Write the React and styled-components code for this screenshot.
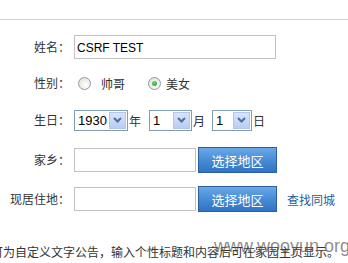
import React from 'react';
import styled, { createGlobalStyle } from 'styled-components';

const GlobalStyle = createGlobalStyle`
  html, body {
    margin: 0;
    padding: 0;
    background: #fff;
  }
  body {
    font-family: "Noto Sans CJK SC", "Liberation Sans", sans-serif;
    font-size: 12px;
    color: #333;
  }
`;

const Page = styled.div`
  position: relative;
  width: 348px;
  height: 263px;
  overflow: hidden;
`;

const TopRule = styled.div`
  height: 19px;
  border-bottom: 1px solid #d6d6d6;
`;

const Form = styled.div`
  padding-top: 15px;
`;

const Row = styled.div`
  display: flex;
  align-items: center;
  height: 24px;
  margin-top: ${(p) => p.$top || 0}px;
`;

const Label = styled.div`
  width: 70px;
  text-align: right;
  flex: none;
  line-height: 24px;
  margin-right: 4px;
  white-space: nowrap;
`;

const TextInput = styled.div`
  box-sizing: border-box;
  width: ${(p) => p.$w}px;
  height: 24px;
  border: 1px solid #c2c2c2;
  padding: 0 2px;
  font-family: "Liberation Sans", Arial, sans-serif;
  font-size: 12px;
  line-height: 24px;
  color: #000;
  background: #fff;
`;

const RadioGroup = styled.label`
  display: flex;
  align-items: center;
  margin-left: ${(p) => p.$left || 0}px;
`;

const RadioDot = styled.span`
  box-sizing: border-box;
  width: 13px;
  height: 13px;
  border-radius: 50%;
  border: 1px solid #8c9aab;
  background: radial-gradient(circle at 60% 65%, #fff 0%, #e6e6e0 70%, #d2d2cc 100%);
  display: flex;
  align-items: center;
  justify-content: center;
  margin-right: ${(p) => p.$gap}px;

  &::after {
    content: '';
    display: ${(p) => (p.$checked ? 'block' : 'none')};
    width: 5px;
    height: 5px;
    border-radius: 50%;
    background: radial-gradient(circle at 40% 35%, #6fd36f, #1f9b2a);
  }
`;

const Select = styled.div`
  box-sizing: border-box;
  display: flex;
  align-items: stretch;
  width: ${(p) => p.$w}px;
  height: 21px;
  border: 1px solid #7f9db9;
  background: #fff;
  font-family: "Liberation Sans", Arial, sans-serif;
  font-size: 13px;
  color: #000;
`;

const SelectValue = styled.span`
  flex: 1;
  padding-left: 3px;
  line-height: 19px;
`;

const SelectArrow = styled.span`
  width: 17px;
  margin: 1px;
  background: linear-gradient(#d9e4f8, #b9cdf1);
  border: 1px solid #b3c6ea;
  box-sizing: border-box;
  display: flex;
  align-items: center;
  justify-content: center;
`;

const Unit = styled.span`
  margin: 0 ${(p) => p.$right || 0}px 0 1px;
  line-height: 21px;
`;

const BlueButton = styled.button`
  box-sizing: border-box;
  width: 79px;
  height: 26px;
  margin-left: 2px;
  padding: 0;
  border: 1px solid #2b5f9e;
  background: linear-gradient(#6aa9e6 0%, #4b8fd8 45%, #2f73c4 100%);
  color: #fff;
  font-family: "Noto Sans CJK SC", sans-serif;
  font-size: 13px;
  cursor: pointer;
`;

const Link = styled.a`
  margin-left: 10px;
  color: #1f5c96;
  text-decoration: none;
  font-size: 12px;
`;

const Notice = styled.div`
  margin-top: 32px;
  margin-left: -9px;
  white-space: nowrap;
  font-size: 12px;
  color: #333;
`;

const Watermark = styled.div`
  position: absolute;
  left: 214px;
  top: 236px;
  font-family: "Liberation Sans", Arial, sans-serif;
  font-size: 18px;
  color: rgba(90, 90, 90, 0.7);
  white-space: nowrap;
`;

const Chevron = () => (
  <svg width="9" height="6" viewBox="0 0 9 6">
    <path d="M1 1 L4.5 4.5 L8 1" fill="none" stroke="#4a6ea9" strokeWidth="2" />
  </svg>
);

const DateSelect = ({ w, value }) => (
  <Select $w={w}>
    <SelectValue>{value}</SelectValue>
    <SelectArrow>
      <Chevron />
    </SelectArrow>
  </Select>
);

const App = () => (
  <Page>
    <GlobalStyle />
    <TopRule />
    <Form>
      <Row>
        <Label>姓名：</Label>
        <TextInput $w={202}>CSRF TEST</TextInput>
      </Row>
      <Row $top={12}>
        <Label>性别：</Label>
        <RadioGroup $left={4}>
          <RadioDot $gap={10} />
          帅哥
        </RadioGroup>
        <RadioGroup $left={23}>
          <RadioDot $gap={5} $checked />
          美女
        </RadioGroup>
      </Row>
      <Row $top={13}>
        <Label>生日：</Label>
        <DateSelect w={54} value="1930" />
        <Unit $right={8}>年</Unit>
        <DateSelect w={43} value="1" />
        <Unit $right={7}>月</Unit>
        <DateSelect w={40} value="1" />
        <Unit>日</Unit>
      </Row>
      <Row $top={16}>
        <Label>家乡：</Label>
        <TextInput $w={122} />
        <BlueButton>选择地区</BlueButton>
      </Row>
      <Row $top={15}>
        <Label>现居住地：</Label>
        <TextInput $w={122} />
        <BlueButton>选择地区</BlueButton>
        <Link href="#">查找同城</Link>
      </Row>
    </Form>
    <Notice>可为自定义文字公告，输入个性标题和内容后可在家园主页显示。</Notice>
    <Watermark>www.wooyun.org</Watermark>
  </Page>
);

export default App;
